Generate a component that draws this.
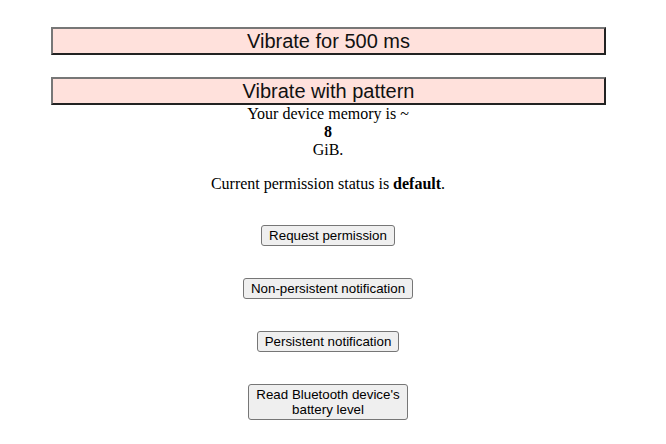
import React from 'react'

const bigBtn =
  "block ml-[51px] w-[555px] h-[28px] bg-[#ffe1dc] border-2 border-t-[#777] border-l-[#777] border-b-[#222] border-r-[#222] text-[20px] leading-[24px] text-[#111] font-['Liberation_Sans',Arial,sans-serif]"

const smallBtn =
  "block mx-auto bg-[#efefef] border border-[#767676] rounded-[3px] px-[7px] py-[1px] text-[13.33px] leading-[17px] text-black font-['Liberation_Sans',Arial,sans-serif]"

function App() {
  return (
    <div className="w-[656px] pt-[27px] text-center text-[16px] text-black font-['Liberation_Serif','Times_New_Roman',serif]">
      <button className={bigBtn}>Vibrate for 500 ms</button>
      <button className={bigBtn + " mt-[22px]"}>Vibrate with pattern</button>

      <p className="leading-[18px]">
        Your device memory is ~
        <br />
        <b>8</b>
        <br />
        GiB.
      </p>

      <p className="mt-[16px] leading-[18px]">
        Current permission status is <b>default</b>.
      </p>

      <button className={smallBtn + " mt-[32px]"}>Request permission</button>
      <button className={smallBtn + " mt-[32px]"}>Non-persistent notification</button>
      <button className={smallBtn + " mt-[32px]"}>Persistent notification</button>
      <button className={smallBtn + " mt-[32px] w-[160px] !leading-[15px] py-[2px]"}>
        Read Bluetooth device's battery level
      </button>
    </div>
  )
}

export default App
